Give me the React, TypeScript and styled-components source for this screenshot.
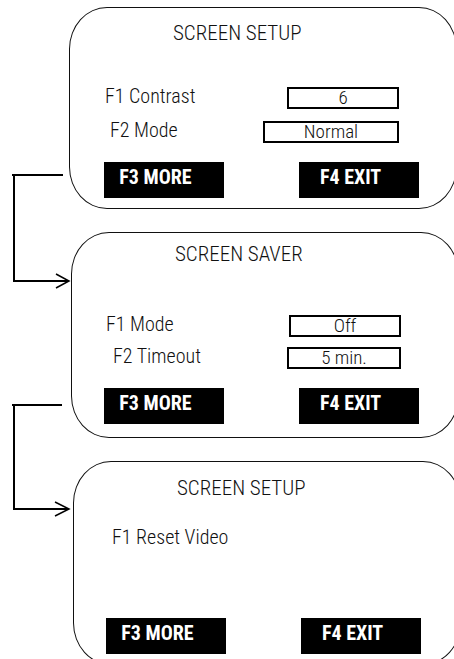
import React from "react";
import styled, { createGlobalStyle } from "styled-components";

type Row = { label: string; value: string; labelIndent: number; boxWidth: number };

type Screen = {
  title: string;
  indent: number;
  height: number;
  titleTop: number;
  rowsTop: number;
  rowGap: number;
  buttonsTop: number;
  buttonsIndent: number;
  rows: Row[];
  plain?: string;
};

const screens: Screen[] = [
  {
    title: "SCREEN SETUP",
    indent: 69,
    height: 202,
    titleTop: 13,
    rowsTop: 40,
    rowGap: 10,
    buttonsTop: 19,
    buttonsIndent: 34,
    rows: [
      { label: "F1 Contrast", value: "6", labelIndent: 2, boxWidth: 112 },
      { label: "F2 Mode", value: "Normal", labelIndent: 7, boxWidth: 136 },
    ],
  },
  {
    title: "SCREEN SAVER",
    indent: 71,
    height: 206,
    titleTop: 9,
    rowsTop: 47,
    rowGap: 8,
    buttonsTop: 19,
    buttonsIndent: 32,
    rows: [
      { label: "F1 Mode", value: "Off", labelIndent: 1, boxWidth: 112 },
      { label: "F2 Timeout", value: "5 min.", labelIndent: 8, boxWidth: 114 },
    ],
  },
  {
    title: "SCREEN SETUP",
    indent: 73,
    height: 204,
    titleTop: 14,
    rowsTop: 26,
    rowGap: 0,
    buttonsTop: 70,
    buttonsIndent: 32,
    rows: [],
    plain: "F1 Reset Video",
  },
];

export default function App() {
  return (
    <>
      <GlobalStyle />
      <Page>
        <Connectors width="80" height="659" viewBox="0 0 80 659">
          <g fill="none" stroke="#000" strokeWidth="2">
            <path d="M12 175 H63" />
            <path d="M14 175 V281 H68" />
            <path d="M56 274 L69 281 L56 288" strokeWidth="1.5" />
            <path d="M12 405 H62" />
            <path d="M14 405 V509 H68" />
            <path d="M55 502 L69 509 L55 516" strokeWidth="1.5" />
          </g>
        </Connectors>
        {screens.map((s, i) => (
          <Panel key={i} $indent={s.indent} $height={s.height}>
            <Title $top={s.titleTop}>{s.title}</Title>
            <Rows $top={s.rowsTop} $gap={s.rowGap}>
              {s.rows.map((r) => (
                <FieldRow key={r.label}>
                  <Label $indent={r.labelIndent}>{r.label}</Label>
                  <ValueBox $width={r.boxWidth}>{r.value}</ValueBox>
                </FieldRow>
              ))}
              {s.plain && <Label $indent={5}>{s.plain}</Label>}
            </Rows>
            <Buttons $top={s.buttonsTop} $indent={s.buttonsIndent}>
              <KeyButton>F3 MORE</KeyButton>
              <KeyButton>F4 EXIT</KeyButton>
            </Buttons>
          </Panel>
        ))}
      </Page>
    </>
  );
}

const GlobalStyle = createGlobalStyle`
  html, body {
    margin: 0;
    padding: 0;
    background: #fff;
    overflow: hidden;
  }
  body {
    width: 454px;
    height: 659px;
    font-family: "Roboto Condensed", "Liberation Sans Narrow", "Noto Sans", sans-serif;
    font-stretch: condensed;
    font-weight: 350;
    color: #111;
  }
`;

const Page = styled.div`
  position: relative;
  display: flex;
  flex-direction: column;
  gap: 23px;
  padding-top: 7px;
  width: 454px;
  height: 659px;
  overflow: hidden;
  box-sizing: border-box;
`;

const Connectors = styled.svg`
  position: absolute;
  left: 0;
  top: 0;
  pointer-events: none;
`;

const Panel = styled.section<{ $indent: number; $height: number }>`
  flex: none;
  display: flex;
  flex-direction: column;
  margin-left: ${(p) => p.$indent}px;
  width: 388px;
  height: ${(p) => p.$height}px;
  border: 1px solid #111;
  border-radius: 38px / 42px;
  box-sizing: border-box;
`;

const Title = styled.h2<{ $top: number }>`
  margin: ${(p) => p.$top}px 0 0 103px;
  font-size: 21px;
  line-height: 24px;
  font-weight: 350;
`;

const Rows = styled.div<{ $top: number; $gap: number }>`
  display: flex;
  flex-direction: column;
  gap: ${(p) => p.$gap}px;
  margin-top: ${(p) => p.$top}px;
  padding: 0 57px 0 33px;
`;

const FieldRow = styled.div`
  display: flex;
  justify-content: space-between;
  align-items: flex-start;
`;

const Label = styled.span<{ $indent: number }>`
  padding-left: ${(p) => p.$indent}px;
  font-size: 20px;
  line-height: 22px;
`;

const ValueBox = styled.div<{ $width: number }>`
  margin-top: 2px;
  width: ${(p) => p.$width}px;
  height: 22px;
  border: 2px solid #000;
  box-sizing: border-box;
  display: flex;
  align-items: center;
  justify-content: center;
  font-size: 19px;
  line-height: 18px;
`;

const Buttons = styled.div<{ $top: number; $indent: number }>`
  display: flex;
  gap: 75px;
  margin-top: ${(p) => p.$top}px;
  padding-left: ${(p) => p.$indent}px;
`;

const KeyButton = styled.div`
  width: 120px;
  height: 36px;
  box-sizing: border-box;
  padding: 4px 17px 0 0;
  background: #000;
  color: #fff;
  display: flex;
  justify-content: center;
  font-size: 20px;
  line-height: 22px;
  font-weight: 700;
`;
